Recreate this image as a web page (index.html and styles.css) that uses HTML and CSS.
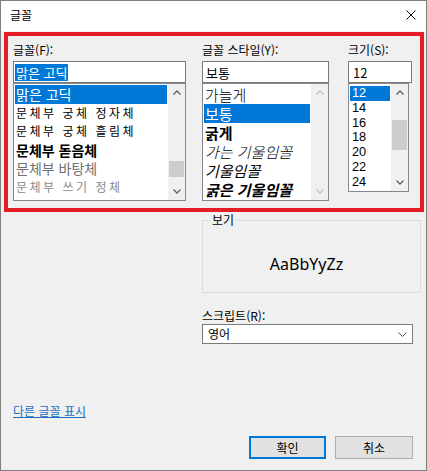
FILE: index.html
```html
<!DOCTYPE html>
<html lang="ko">
<head>
    <meta charset="UTF-8">
    <meta name="viewport" content="width=device-width, initial-scale=1.0">
    <title>글꼴</title>
    <link rel="stylesheet" href="styles.css">
</head>
<body>

    <div class="window">
        <div class="titlebar">
            <span class="title">글꼴</span>
            <svg class="close" width="10" height="10" viewBox="0 0 10 10">
                <path d="M0.5 0.5 L9.5 9.5 M9.5 0.5 L0.5 9.5" stroke="#000" stroke-width="1" fill="none"/>
            </svg>
        </div>

        <!-- Font / style / size pickers -->
        <div class="pickers">
            <div class="column col-font">
                <div class="label">글꼴(F):</div>
                <div class="edit edit-font"><span class="edit-selected">맑은 고딕</span></div>
                <div class="listbox list-font">
                    <ul class="items">
                        <li class="selected f-malgun">맑은 고딕</li>
                        <li class="f-gung">문체부 궁체 정자체</li>
                        <li class="f-gung">문체부 궁체 흘림체</li>
                        <li class="f-dotum">문체부 돋음체</li>
                        <li class="f-batang">문체부 바탕체</li>
                        <li class="f-sseugi">문체부 쓰기 정체</li>
                    </ul>
                    <div class="scrollbar">
                        <div class="arrow">
                            <svg width="8" height="5" viewBox="0 0 8 5"><polyline points="0.5,4.5 4,1 7.5,4.5" fill="none" stroke="#606060" stroke-width="1.3"/></svg>
                        </div>
                        <div class="track track-font"><div class="thumb thumb-font"></div></div>
                        <div class="arrow">
                            <svg width="8" height="5" viewBox="0 0 8 5"><polyline points="0.5,0.5 4,4 7.5,0.5" fill="none" stroke="#606060" stroke-width="1.3"/></svg>
                        </div>
                    </div>
                </div>
            </div>

            <div class="column col-style">
                <div class="label">글꼴 스타일(Y):</div>
                <div class="edit edit-style">보통</div>
                <div class="listbox list-style">
                    <ul class="items">
                        <li class="s-thin">가늘게</li>
                        <li class="selected">보통</li>
                        <li class="s-bold">굵게</li>
                        <li class="s-thin s-italic">가는 기울임꼴</li>
                        <li class="s-italic">기울임꼴</li>
                        <li class="s-bold s-italic">굵은 기울임꼴</li>
                    </ul>
                    <div class="scrollbar disabled">
                        <div class="arrow">
                            <svg width="8" height="5" viewBox="0 0 8 5"><polyline points="0.5,4.5 4,1 7.5,4.5" fill="none" stroke="#c0c0c0" stroke-width="1.3"/></svg>
                        </div>
                        <div class="track"></div>
                        <div class="arrow">
                            <svg width="8" height="5" viewBox="0 0 8 5"><polyline points="0.5,0.5 4,4 7.5,0.5" fill="none" stroke="#c0c0c0" stroke-width="1.3"/></svg>
                        </div>
                    </div>
                </div>
            </div>

            <div class="column col-size">
                <div class="label">크기(S):</div>
                <div class="edit edit-size">12</div>
                <div class="listbox list-size">
                    <ul class="items">
                        <li class="selected">12</li>
                        <li>14</li>
                        <li>16</li>
                        <li>18</li>
                        <li>20</li>
                        <li>22</li>
                        <li>24</li>
                    </ul>
                    <div class="scrollbar">
                        <div class="arrow">
                            <svg width="8" height="5" viewBox="0 0 8 5"><polyline points="0.5,4.5 4,1 7.5,4.5" fill="none" stroke="#606060" stroke-width="1.3"/></svg>
                        </div>
                        <div class="track track-size"><div class="thumb thumb-size"></div></div>
                        <div class="arrow">
                            <svg width="8" height="5" viewBox="0 0 8 5"><polyline points="0.5,0.5 4,4 7.5,0.5" fill="none" stroke="#606060" stroke-width="1.3"/></svg>
                        </div>
                    </div>
                </div>
            </div>
        </div>

        <!-- Preview and script -->
        <div class="lower">
            <fieldset class="preview">
                <legend>보기</legend>
                <div class="preview-area">AaBbYyZz</div>
            </fieldset>

            <div class="label script-label">스크립트(R):</div>
            <div class="select">
                <span>영어</span>
                <svg width="9" height="5" viewBox="0 0 9 5"><polyline points="0.5,0.5 4.5,4.5 8.5,0.5" fill="none" stroke="#505050" stroke-width="1"/></svg>
            </div>
        </div>

        <div class="footer">
            <a class="more-fonts" href="#">다른 글꼴 표시</a>
            <div class="buttons">
                <button class="btn btn-default">확인</button>
                <button class="btn btn-cancel">취소</button>
            </div>
        </div>
    </div>

</body>
</html>
```

FILE: styles.css
```css
body {
    margin: 0;
    font-family: "Noto Sans CJK KR", "Noto Sans", sans-serif;
    color: #000;
}

.window {
    width: 427px;
    height: 471px;
    box-sizing: border-box;
    border: 1px solid #7f7f7f;
    background: #f0f0f0;
    overflow: hidden;
}

.titlebar {
    height: 30px;
    background: #fff;
    display: flex;
    align-items: center;
    justify-content: space-between;
    padding: 0 10px 2px 9px;
    box-sizing: border-box;
}

.title {
    font-size: 12px;
    line-height: 14px;
}

/* red highlight frame around the three pickers */
.pickers {
    margin: 1px 2px 0 3px;
    border: 4px solid #e41e26;
    height: 180px;
    box-sizing: border-box;
    padding: 6px 8px 0 5px;
    display: flex;
}

.col-font {
    width: 173px;
}

.col-style {
    width: 127px;
    margin-left: 16px;
}

.col-size {
    width: 64px;
    margin-left: 19px;
}

.label {
    font-size: 12px;
    line-height: 16px;
    height: 16px;
    margin-bottom: 3px;
    white-space: nowrap;
}

.edit {
    height: 22px;
    box-sizing: border-box;
    border: 1px solid #7a7a7a;
    background: #fff;
    display: flex;
    align-items: center;
    font-size: 13px;
    line-height: 17px;
    white-space: nowrap;
}

.edit-font {
    padding-left: 1px;
}

.edit-selected {
    background: #0078d7;
    color: #fff;
    padding: 0 1px;
}

.edit-style {
    padding-left: 3px;
}

.edit-size {
    padding-left: 4px;
}

.listbox {
    display: flex;
    height: 118px;
    box-sizing: border-box;
    border: 1px solid #828790;
    background: #fff;
}

.list-size {
    width: 61px;
    height: 109px;
}

.items {
    flex: 1;
    margin: 0;
    padding: 1px;
    list-style: none;
    overflow: hidden;
    min-width: 0;
}

.items li {
    white-space: nowrap;
    padding-left: 1px;
}

.items li.selected {
    background: #0078d7;
    color: #fff;
}

.list-font li {
    height: 18.6px;
    line-height: 18.6px;
    font-size: 14px;
}

.f-gung {
    font-size: 12px !important;
    letter-spacing: 2.5px;
}

.f-dotum {
    font-weight: 700;
}

.f-batang {
    color: #707070;
}

.f-sseugi {
    font-size: 12px !important;
    letter-spacing: 2.5px;
    color: #8a8a8a;
}

.list-style li {
    height: 19px;
    line-height: 19px;
    font-size: 15px;
}

.s-thin {
    font-weight: 300;
}

.s-bold {
    font-weight: 700;
}

.s-italic {
    font-style: italic;
}

.list-size .items {
    padding-top: 2px;
}

.list-size li {
    height: 14.8px;
    line-height: 14.8px;
    font-family: "Liberation Sans", sans-serif;
    font-size: 12.8px;
    padding-left: 2px;
}

.scrollbar {
    width: 17px;
    flex-shrink: 0;
    background: #f0f0f0;
    display: flex;
    flex-direction: column;
}

.arrow {
    height: 17px;
    display: flex;
    align-items: center;
    justify-content: center;
}

.track {
    flex: 1;
}

.thumb {
    background: #cdcdcd;
    margin: 0 1px;
}

.thumb-font {
    margin-top: 60px;
    height: 16px;
}

.thumb-size {
    margin-top: 19px;
    height: 30px;
}

.lower {
    padding-left: 201px;
}

.preview {
    margin: 1px 0 0;
    padding: 0;
    width: 219px;
    box-sizing: border-box;
    border: 1px solid #dcdcdc;
}

.preview legend {
    font-size: 12px;
    line-height: 14px;
    padding: 0 2px;
    margin-left: 7px;
}

.preview-area {
    height: 65px;
    box-sizing: border-box;
    padding: 8px 10px 0 0;
    display: flex;
    align-items: center;
    justify-content: center;
    font-family: "Noto Sans", sans-serif;
    font-size: 16px;
}

.script-label {
    margin-top: 16px;
    line-height: 14px;
    height: 14px;
    margin-bottom: 1px;
}

.select {
    width: 211px;
    height: 20px;
    box-sizing: border-box;
    border: 1px solid #7a7a7a;
    background: #fff;
    display: flex;
    align-items: center;
    justify-content: space-between;
    padding: 0 5px 0 5px;
    font-size: 12px;
    line-height: 16px;
}

.footer {
    padding: 59px 13px 0 12px;
}

.more-fonts {
    display: block;
    width: max-content;
    font-size: 12px;
    line-height: 16px;
    color: #1a6dbf;
    text-decoration: underline;
}

.buttons {
    display: flex;
    justify-content: flex-end;
    gap: 9px;
    margin-top: 17px;
}

.btn {
    height: 23px;
    box-sizing: border-box;
    background: #e1e1e1;
    border: 1px solid #adadad;
    font-family: "Noto Sans CJK KR", sans-serif;
    font-size: 12px;
    line-height: 16px;
    padding: 0;
    color: #000;
}

.btn-default {
    width: 77px;
    border: 2px solid #0078d7;
}

.btn-cancel {
    width: 78px;
}
```
